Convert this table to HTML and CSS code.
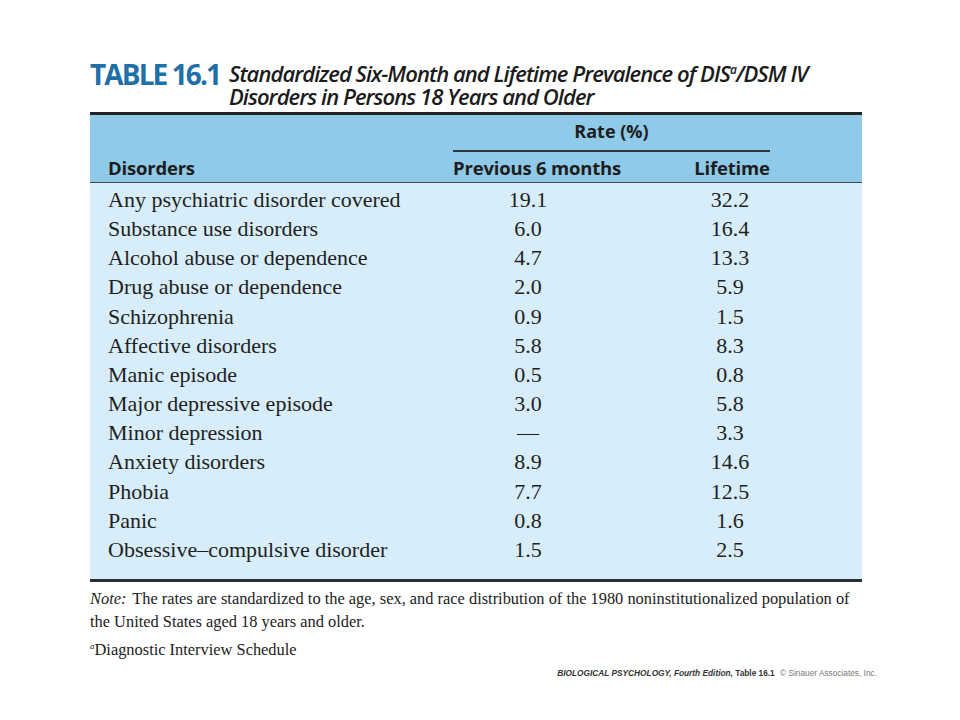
FILE: index.html
```html
<!DOCTYPE html>
<html>
<head>
<meta charset="utf-8">
<link rel="stylesheet" href="styles.css">
</head>
<body>
<div class="page">
  <div class="title">
    <div class="label">TABLE 16.1</div>
    <div class="caption">Standardized Six-Month and Lifetime Prevalence of DIS<sup>a</sup>/DSM IV<br>Disorders in Persons 18 Years and Older</div>
  </div>
  <div class="table">
    <div class="head">
      <div class="grid">
        <div class="rate">Rate (%)</div>
      </div>
      <div class="grid sub">
        <div class="hcell first">Disorders</div>
        <div class="hcell num">Previous 6 months</div>
        <div class="hcell num">Lifetime</div>
      </div>
    </div>
    <div class="body">
      <div class="grid row"><div class="name">Any psychiatric disorder covered</div><div class="v1">19.1</div><div class="v2">32.2</div></div>
      <div class="grid row"><div class="name">Substance use disorders</div><div class="v1">6.0</div><div class="v2">16.4</div></div>
      <div class="grid row"><div class="name">Alcohol abuse or dependence</div><div class="v1">4.7</div><div class="v2">13.3</div></div>
      <div class="grid row"><div class="name">Drug abuse or dependence</div><div class="v1">2.0</div><div class="v2">5.9</div></div>
      <div class="grid row"><div class="name">Schizophrenia</div><div class="v1">0.9</div><div class="v2">1.5</div></div>
      <div class="grid row"><div class="name">Affective disorders</div><div class="v1">5.8</div><div class="v2">8.3</div></div>
      <div class="grid row"><div class="name">Manic episode</div><div class="v1">0.5</div><div class="v2">0.8</div></div>
      <div class="grid row"><div class="name">Major depressive episode</div><div class="v1">3.0</div><div class="v2">5.8</div></div>
      <div class="grid row"><div class="name">Minor depression</div><div class="v1">—</div><div class="v2">3.3</div></div>
      <div class="grid row"><div class="name">Anxiety disorders</div><div class="v1">8.9</div><div class="v2">14.6</div></div>
      <div class="grid row"><div class="name">Phobia</div><div class="v1">7.7</div><div class="v2">12.5</div></div>
      <div class="grid row"><div class="name">Panic</div><div class="v1">0.8</div><div class="v2">1.6</div></div>
      <div class="grid row"><div class="name">Obsessive–compulsive disorder</div><div class="v1">1.5</div><div class="v2">2.5</div></div>
    </div>
  </div>
  <div class="notes">
    <p class="note"><i>Note:</i> The rates are standardized to the age, sex, and race distribution of the 1980 noninstitutionalized population of the United States aged 18 years and older.</p>
    <p class="foot"><sup>a</sup>Diagnostic Interview Schedule</p>
  </div>
  <div class="credit"><b><i>BIOLOGICAL PSYCHOLOGY, Fourth Edition,</i> Table 16.1</b> <span class="copy">© Sinauer Associates, Inc.</span></div>
</div>
</body>
</html>
```
FILE: styles.css
```css
html, body {
  margin: 0;
  padding: 0;
  background: #fff;
}
.page {
  width: 960px;
  height: 720px;
  padding: 58px 0 0 90px;
  box-sizing: border-box;
}
.title {
  display: flex;
  align-items: flex-start;
  height: 54px;
}
.label {
  font-family: "Open Sans", sans-serif;
  font-weight: 700;
  font-size: 28px;
  line-height: 32px;
  color: #1f6fa8;
  letter-spacing: -1.9px;
  width: 139px;
  flex: none;
}
.caption {
  font-family: "Open Sans", sans-serif;
  font-style: italic;
  font-weight: 600;
  font-size: 22px;
  line-height: 23px;
  letter-spacing: -0.95px;
  color: #1b1b1b;
  padding-top: 4px;
}
.caption sup {
  font-size: 12px;
  line-height: 0;
  vertical-align: 8px;
}
.table {
  width: 772px;
}
.head {
  border-top: 3px solid #222;
  border-bottom: 1px solid #3d4a52;
  background: #8fcae8;
  height: 67px;
  box-sizing: content-box;
}
.grid {
  display: grid;
  grid-template-columns: 355px 184px 206px 1fr;
}
.rate {
  grid-column: 2 / 4;
  margin: 0 65px 0 8px;
  text-align: center;
  font-family: "Open Sans", sans-serif;
  font-weight: 700;
  font-size: 18px;
  line-height: 20px;
  padding: 6px 0 9px;
  border-bottom: 2px solid #2a3540;
  color: #1d1d1d;
}
.sub {
  padding-top: 3px;
}
.hcell {
  font-family: "Open Sans", sans-serif;
  font-weight: 700;
  font-size: 18.5px;
  line-height: 26px;
  color: #1d1d1d;
  letter-spacing: -0.2px;
}
.hcell.first {
  padding-left: 18px;
}
.hcell.num {
  text-align: center;
}
.body {
  background: #d7edf9;
  border-bottom: 3px solid #2b2f33;
  padding: 2px 0 15px;
}
.row {
  height: 29.17px;
  font-family: "Liberation Serif", serif;
  font-size: 22px;
  line-height: 29px;
  color: #1f1f1f;
}
.name {
  padding-left: 18px;
  white-space: nowrap;
}
.v1 {
  text-align: center;
  padding-right: 18px;
}
.v2 {
  text-align: center;
  padding-right: 4px;
}
.notes {
  width: 770px;
  font-family: "Liberation Serif", serif;
  font-size: 16.4px;
  line-height: 23px;
  color: #222;
}
.note {
  margin: 5px 0 0;
}
.note i {
  padding-right: 2px;
}
.foot {
  margin: 5px 0 0;
}
.foot sup {
  font-size: 9px;
  line-height: 0;
  vertical-align: 6px;
  font-style: italic;
}
.credit {
  margin-top: 7px;
  width: 787px;
  text-align: right;
  font-family: "Liberation Sans", sans-serif;
  font-size: 8.3px;
  color: #333;
}
.credit .copy {
  font-weight: 400;
  color: #777;
  margin-left: 3px;
}
```
